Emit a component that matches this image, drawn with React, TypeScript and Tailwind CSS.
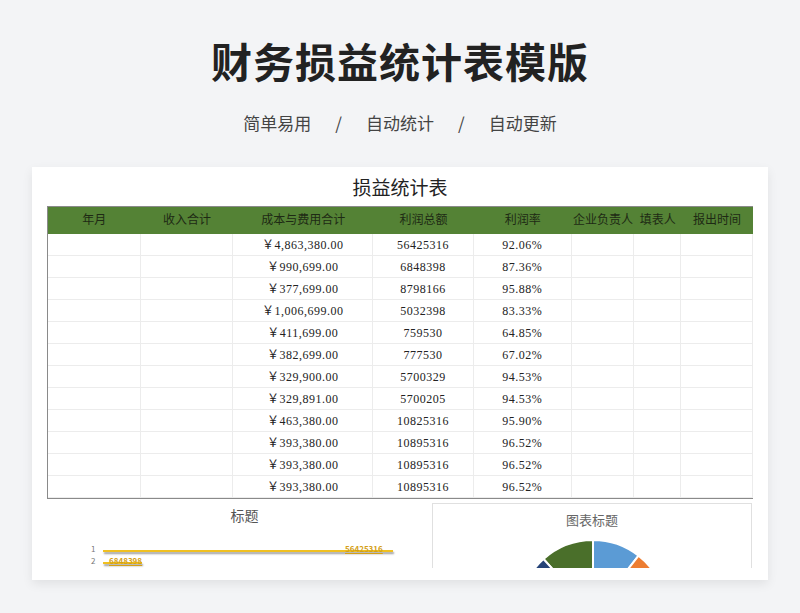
const rows = [
  ["￥4,863,380.00", "56425316", "92.06%"],
  ["￥990,699.00", "6848398", "87.36%"],
  ["￥377,699.00", "8798166", "95.88%"],
  ["￥1,006,699.00", "5032398", "83.33%"],
  ["￥411,699.00", "759530", "64.85%"],
  ["￥382,699.00", "777530", "67.02%"],
  ["￥329,900.00", "5700329", "94.53%"],
  ["￥329,891.00", "5700205", "94.53%"],
  ["￥463,380.00", "10825316", "95.90%"],
  ["￥393,380.00", "10895316", "96.52%"],
  ["￥393,380.00", "10895316", "96.52%"],
  ["￥393,380.00", "10895316", "96.52%"],
];
const widths = [93, 93, 140, 101, 98, 63, 47, 72];
const heads = ["年月", "收入合计", "成本与费用合计", "利润总额", "利润率", "企业负责人", "填表人", "报出时间"];
const serif = { fontFamily: '"Liberation Serif","Noto Sans CJK SC",serif' };

function pt(a: number, r: number, cx: number, cy: number) {
  const rad = (a * Math.PI) / 180;
  return `${cx + r * Math.cos(rad)},${cy - r * Math.sin(rad)}`;
}
function slice(a1: number, a2: number, color: string) {
  const cx = 160, cy = 110, r = 74;
  return <path d={`M${cx},${cy} L${pt(a1, r, cx, cy)} A${r},${r} 0 0,1 ${pt(a2, r, cx, cy)} Z`} fill={color} stroke="#fff" strokeWidth={2} />;
}

export default function App() {
  return (
    <div className="w-[800px] h-[613px] bg-[#f3f4f6] flex flex-col items-center overflow-hidden" style={{ fontFamily: '"Noto Sans CJK SC",sans-serif' }}>
      <h1 className="mt-[33px] h-[54px] text-[41px] leading-[54px] font-bold text-[#222] tracking-[1px]">财务损益统计表模版</h1>
      <div className="mt-[24px] h-[24px] text-[17px] leading-[24px] text-[#444] flex gap-[18px]">
        <span>简单易用</span><span className="mx-[6px]">/</span><span>自动统计</span><span className="mx-[6px]">/</span><span>自动更新</span>
      </div>
      <div className="mt-[32px] w-[736px] h-[413px] bg-white shadow-[0_4px_10px_rgba(0,0,0,0.08)] px-[15px] overflow-hidden">
        <div className="h-[401px] overflow-hidden">
          <div className="h-[39px] text-center text-[19px] leading-[44px] text-[#222]" style={serif}>损益统计表</div>
          <div className="w-[707px] border border-[#8a8a8a]">
            <div className="flex bg-[#548235] h-[27px] text-[12px] text-[#1e2a14] leading-[27px]" style={serif}>
              {heads.map((h, i) => <div key={i} className="text-center" style={{ width: widths[i] }}>{h}</div>)}
            </div>
            {rows.map((r, i) => (
              <div key={i} className="flex h-[22px] text-[12px] leading-[22px] text-[#222] tracking-[0.5px]" style={serif}>
                {widths.map((w, j) => (
                  <div key={j} className="border-r border-b border-[#ececec] text-center" style={{ width: w }}>
                    {j === 2 ? r[0] : j === 3 ? r[1] : j === 4 ? r[2] : ""}
                  </div>
                ))}
              </div>
            ))}
          </div>
          <div className="flex">
            <div className="w-[385px] h-[80px] relative">
              <div className="text-center text-[14px] text-[#555] mt-[6px] pl-[10px]">标题</div>
              <div className="absolute left-[44px] top-[44px] text-[8px] text-[#777]">1</div>
              <div className="absolute left-[56px] top-[51px] w-[290px] h-[2px] bg-[#f0c020] shadow-[1px_2px_2px_rgba(0,0,0,0.4)]" />
              <div className="absolute left-[298px] top-[44px] text-[8px] text-[#d4a017] font-bold underline">56425316</div>
              <div className="absolute left-[44px] top-[56px] text-[8px] text-[#777]">2</div>
              <div className="absolute left-[56px] top-[63px] w-[39px] h-[2px] bg-[#f0c020] shadow-[1px_2px_2px_rgba(0,0,0,0.4)]" />
              <div className="absolute left-[62px] top-[56px] text-[8px] text-[#d4a017] font-bold underline">6848398</div>
            </div>
            <div className="mt-[4px] w-[320px] h-[80px] border border-[#e0e0e0] relative overflow-hidden">
              <div className="text-center text-[13px] text-[#666] mt-[6px]">图表标题</div>
              <svg className="absolute left-0 top-0" width="320" height="80" viewBox="0 0 320 80">
                {slice(90, 52, "#5b9bd5")}
                {slice(52, 0, "#ed7d31")}
                {slice(132, 90, "#4a6f2a")}
                {slice(180, 132, "#264478")}
              </svg>
            </div>
          </div>
        </div>
      </div>
    </div>
  );
}
